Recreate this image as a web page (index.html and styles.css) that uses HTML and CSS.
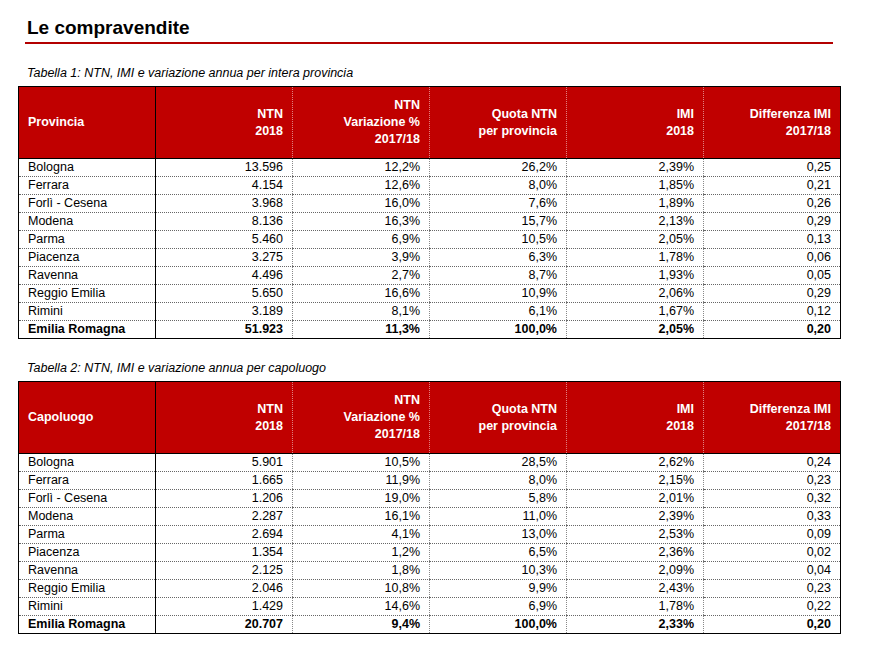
FILE: index.html
```html
<!DOCTYPE html>
<html lang="it">
<head>
<meta charset="utf-8">
<title>Le compravendite</title>
<link rel="stylesheet" href="styles.css">
</head>
<body>
<div class="page">
  <h1 class="title">Le compravendite</h1>

  <p class="caption">Tabella 1: NTN, IMI e variazione annua per intera provincia</p>
  <table class="data">
    <thead>
      <tr>
        <th class="first">Provincia</th>
        <th>NTN<br>2018</th>
        <th>NTN<br>Variazione %<br>2017/18</th>
        <th>Quota NTN<br>per provincia</th>
        <th>IMI<br>2018</th>
        <th>Differenza IMI<br>2017/18</th>
      </tr>
    </thead>
    <tbody>
      <tr><td class="first">Bologna</td><td>13.596</td><td>12,2%</td><td>26,2%</td><td>2,39%</td><td>0,25</td></tr>
      <tr><td class="first">Ferrara</td><td>4.154</td><td>12,6%</td><td>8,0%</td><td>1,85%</td><td>0,21</td></tr>
      <tr><td class="first">Forlì - Cesena</td><td>3.968</td><td>16,0%</td><td>7,6%</td><td>1,89%</td><td>0,26</td></tr>
      <tr><td class="first">Modena</td><td>8.136</td><td>16,3%</td><td>15,7%</td><td>2,13%</td><td>0,29</td></tr>
      <tr><td class="first">Parma</td><td>5.460</td><td>6,9%</td><td>10,5%</td><td>2,05%</td><td>0,13</td></tr>
      <tr><td class="first">Piacenza</td><td>3.275</td><td>3,9%</td><td>6,3%</td><td>1,78%</td><td>0,06</td></tr>
      <tr><td class="first">Ravenna</td><td>4.496</td><td>2,7%</td><td>8,7%</td><td>1,93%</td><td>0,05</td></tr>
      <tr><td class="first">Reggio Emilia</td><td>5.650</td><td>16,6%</td><td>10,9%</td><td>2,06%</td><td>0,29</td></tr>
      <tr><td class="first">Rimini</td><td>3.189</td><td>8,1%</td><td>6,1%</td><td>1,67%</td><td>0,12</td></tr>
      <tr class="total"><td class="first">Emilia Romagna</td><td>51.923</td><td>11,3%</td><td>100,0%</td><td>2,05%</td><td>0,20</td></tr>
    </tbody>
  </table>

  <p class="caption">Tabella 2: NTN, IMI e variazione annua per capoluogo</p>
  <table class="data">
    <thead>
      <tr>
        <th class="first">Capoluogo</th>
        <th>NTN<br>2018</th>
        <th>NTN<br>Variazione %<br>2017/18</th>
        <th>Quota NTN<br>per provincia</th>
        <th>IMI<br>2018</th>
        <th>Differenza IMI<br>2017/18</th>
      </tr>
    </thead>
    <tbody>
      <tr><td class="first">Bologna</td><td>5.901</td><td>10,5%</td><td>28,5%</td><td>2,62%</td><td>0,24</td></tr>
      <tr><td class="first">Ferrara</td><td>1.665</td><td>11,9%</td><td>8,0%</td><td>2,15%</td><td>0,23</td></tr>
      <tr><td class="first">Forlì - Cesena</td><td>1.206</td><td>19,0%</td><td>5,8%</td><td>2,01%</td><td>0,32</td></tr>
      <tr><td class="first">Modena</td><td>2.287</td><td>16,1%</td><td>11,0%</td><td>2,39%</td><td>0,33</td></tr>
      <tr><td class="first">Parma</td><td>2.694</td><td>4,1%</td><td>13,0%</td><td>2,53%</td><td>0,09</td></tr>
      <tr><td class="first">Piacenza</td><td>1.354</td><td>1,2%</td><td>6,5%</td><td>2,36%</td><td>0,02</td></tr>
      <tr><td class="first">Ravenna</td><td>2.125</td><td>1,8%</td><td>10,3%</td><td>2,09%</td><td>0,04</td></tr>
      <tr><td class="first">Reggio Emilia</td><td>2.046</td><td>10,8%</td><td>9,9%</td><td>2,43%</td><td>0,23</td></tr>
      <tr><td class="first">Rimini</td><td>1.429</td><td>14,6%</td><td>6,9%</td><td>1,78%</td><td>0,22</td></tr>
      <tr class="total"><td class="first">Emilia Romagna</td><td>20.707</td><td>9,4%</td><td>100,0%</td><td>2,33%</td><td>0,20</td></tr>
    </tbody>
  </table>
</div>
</body>
</html>
```

FILE: styles.css
```css
html, body {
  margin: 0;
  padding: 0;
  background: #ffffff;
}

body {
  font-family: "Liberation Sans Narrow", "Arial Narrow", "Liberation Sans", Arial, sans-serif;
  color: #000;
}

.page {
  padding: 0 31px 0 18px;
}

.title {
  margin: 0 0 0 7px;
  padding: 15px 0 1px 2px;
  font-size: 19px;
  line-height: 26px;
  font-weight: bold;
  border-bottom: 2px solid #b30000;
  width: 806px;
}

.caption {
  margin: 0;
  padding: 0 0 0 9px;
  font-style: italic;
  font-size: 12.5px;
  line-height: 17px;
}

.title + .caption {
  margin-top: 21px;
  margin-bottom: 4px;
}

.data + .caption {
  margin-top: 21px;
  margin-bottom: 4px;
}

.data {
  border-collapse: collapse;
  table-layout: fixed;
  width: 822px;
  border: 1px solid #000;
}

.data th,
.data td {
  box-sizing: border-box;
  width: 137px;
  padding: 0 9px;
  text-align: right;
  border-left: 1px dotted #888;
}

.data th {
  background: #c00000;
  color: #fff;
  font-weight: bold;
  font-size: 12.5px;
  line-height: 17px;
  height: 72px;
  vertical-align: middle;
  border-bottom: 1px solid #000;
  border-left-color: #e08080;
}

.data td {
  font-size: 12.5px;
  line-height: 17px;
  height: 18px;
  border-bottom: 1px dotted #666;
  white-space: nowrap;
}

.data .first {
  text-align: left;
  border-left: none;
  border-right: 1px solid #000;
}

.data th.first {
  border-right: 1px solid #000;
}

.data .total td {
  font-weight: bold;
  border-bottom: none;
}
```
